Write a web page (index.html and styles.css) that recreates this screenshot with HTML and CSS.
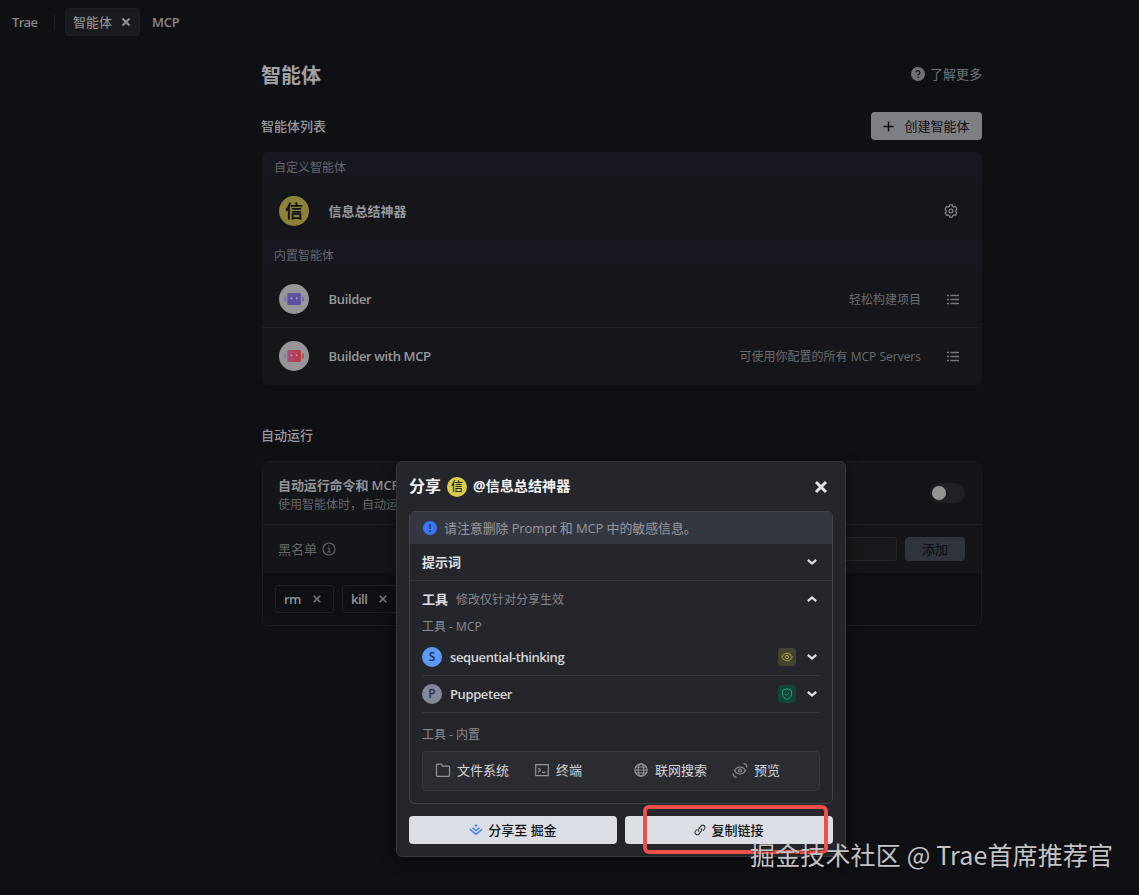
FILE: index.html
```html
<!DOCTYPE html>
<html lang="zh-CN">
<head>
  <meta charset="UTF-8">
  <title>智能体</title>
  <link rel="stylesheet" href="styles.css">
</head>
<body>

  <!-- Tabs -->
  <div class="tabs">
    <div class="tab tab-first">Trae</div>
    <div class="tab-line"></div>
    <div class="tab active">智能体
      <svg width="10" height="10" viewBox="0 0 10 10"><path d="M1.5 1.5l7 7M8.5 1.5l-7 7" stroke="#8f9094" stroke-width="2"/></svg>
    </div>
    <div class="tab tab-mcp">MCP</div>
  </div>

  <div class="page">
    <div class="page-head">
      <h1>智能体</h1>
      <div class="learn-more">
        <svg width="14" height="14" viewBox="0 0 14 14"><circle cx="7" cy="7" r="7" fill="#707174"/><path d="M5.1 5.5a1.9 1.9 0 1 1 2.8 1.7c-.6.3-.9.6-.9 1.2" fill="none" stroke="#101115" stroke-width="1.3"/><circle cx="7" cy="10.3" r=".8" fill="#101115"/></svg>
        了解更多
      </div>
    </div>

    <div class="list-head">
      <h2>智能体列表</h2>
      <button class="create">
        <svg width="11" height="11" viewBox="0 0 11 11"><path d="M5.5 .5v10M.5 5.5h10" stroke="#0c0d10" stroke-width="1.4"/></svg>
        创建智能体
      </button>
    </div>

    <div class="card">
      <div class="group">自定义智能体</div>
      <div class="agent custom">
        <div class="avatar yellow">信</div>
        <div class="agent-name">信息总结神器</div>
        <svg class="gear" width="14" height="14" viewBox="0 0 14 14" fill="none" stroke="#85868a" stroke-width="1.2" stroke-linejoin="round"><path d="M5.7.8h2.6l.5 1.7 1.1.6 1.7-.4 1.3 2.3-1.2 1.3v1.4l1.2 1.3-1.3 2.3-1.7-.4-1.1.6-.5 1.7H5.7l-.5-1.7-1.1-.6-1.7.4L1.1 9l1.2-1.3V6.3L1.1 5l1.3-2.3 1.7.4 1.1-.6z"/><circle cx="7" cy="7" r="1.9"/></svg>
      </div>
      <div class="group">内置智能体</div>
      <div class="agent">
        <div class="avatar">
          <svg width="20" height="14" viewBox="0 0 20 14"><rect x="3.3" y="1" width="13.6" height="12" rx="1.5" fill="#5d51a4"/><path d="M1 4.5v5M19 4.5v5" stroke="#7268ad" stroke-width="1.7"/><circle cx="7.5" cy="6.3" r=".9" fill="#b9b4d6"/><circle cx="12.7" cy="6.3" r=".9" fill="#b9b4d6"/></svg>
        </div>
        <div class="agent-name latin">Builder</div>
        <div class="agent-desc">轻松构建项目</div>
        <svg class="list-icon" width="12" height="12" viewBox="0 0 12 12"><path d="M0 1.500h2M0 5.500h2M0 9.500h2M3.500 1.500H12M3.500 5.500H12M3.500 9.500H12" stroke="#77787c" stroke-width="1.300"/></svg>
      </div>
      <div class="agent last">
        <div class="avatar">
          <svg width="20" height="14" viewBox="0 0 20 14"><defs><linearGradient id="mcp"><stop offset="0" stop-color="#a75085"/><stop offset="1" stop-color="#b83339"/></linearGradient></defs><rect x="3.3" y="1" width="13.6" height="12" rx="1.5" fill="url(#mcp)"/><path d="M1 4.5v5" stroke="#9a74a0" stroke-width="1.7"/><path d="M19 4.5v5" stroke="#b1474b" stroke-width="1.7"/><circle cx="7.5" cy="6.3" r=".9" fill="#d5a7b4"/><circle cx="12.7" cy="6.3" r=".9" fill="#d5a7b4"/></svg>
        </div>
        <div class="agent-name latin">Builder with MCP</div>
        <div class="agent-desc">可使用你配置的所有 MCP Servers</div>
        <svg class="list-icon" width="12" height="12" viewBox="0 0 12 12"><path d="M0 1.500h2M0 5.500h2M0 9.500h2M3.500 1.500H12M3.500 5.500H12M3.500 9.500H12" stroke="#77787c" stroke-width="1.300"/></svg>
      </div>
    </div>

    <h2 class="auto-title">自动运行</h2>

    <div class="card auto">
      <div class="auto-row">
        <div class="auto-text">
          <h3>自动运行命令和 MCP</h3>
          <p>使用智能体时，自动运</p>
        </div>
        <div class="switch"></div>
      </div>
      <div class="black-row">
        <span>黑名单</span>
        <svg width="14" height="14" viewBox="0 0 14 14" fill="none" stroke="#66676b" stroke-width="1.1"><circle cx="7" cy="7" r="6"/><path d="M5.8 6.2H7.2V10M5.5 10h3.2M7 3.5v1.3"/></svg>
        <div class="black-input"></div>
        <button class="add">添加</button>
      </div>
      <div class="chips">
        <div class="chip">rm <svg width="8" height="8" viewBox="0 0 8 8"><path d="M.7 .7l6.600 6.600M7.300 .7L.7 7.300" stroke="#77787c" stroke-width="1.6"/></svg></div>
        <div class="chip">kill <svg width="8" height="8" viewBox="0 0 8 8"><path d="M.7 .7l6.600 6.600M7.300 .7L.7 7.300" stroke="#77787c" stroke-width="1.6"/></svg></div>
      </div>
    </div>
  </div>

  <!-- Share dialog -->
  <div class="modal">
    <div class="modal-head">
      <span class="share">分享</span>
      <span class="avatar-sm">信</span>
      <span class="share-name">@信息总结神器</span>
      <svg width="14" height="14" viewBox="0 0 14 14"><path d="M2 2l10 10M12 2L2 12" stroke="#e2e3e6" stroke-width="3"/></svg>
    </div>

    <div class="panel">
      <div class="notice">
        <svg width="14" height="14" viewBox="0 0 14 14"><circle cx="7" cy="7" r="7" fill="#3a76f5"/><path d="M7 3v5" stroke="#1d2d52" stroke-width="1.4"/><circle cx="7" cy="10.2" r=".9" fill="#1d2d52"/></svg>
        <span>请注意删除 Prompt 和 MCP 中的敏感信息。</span>
      </div>
      <div class="prompt-row">
        <b>提示词</b>
        <svg class="chevron" width="10" height="6" viewBox="0 0 10 6"><path d="M.8 .8L5 4.5 9.2 .8"/></svg>
      </div>
      <div class="tools">
        <div class="tools-head">
          <b>工具</b><span>修改仅针对分享生效</span>
          <svg class="chevron" width="10" height="6" viewBox="0 0 10 6"><path d="M.8 5.2L5 1.5 9.2 5.2"/></svg>
        </div>
        <div class="label">工具 - MCP</div>
        <div class="tool">
          <span class="letter blue">S</span>
          <span class="tool-name">sequential-thinking</span>
          <span class="badge eye"><svg width="12" height="12" viewBox="0 0 12 12" fill="none" stroke="#b5ac4c"><path d="M.8 6C2 3.600 3.800 2.200 6 2.200S10 3.600 11.200 6C10 8.400 8.200 9.800 6 9.800S2 8.400 .8 6z"/><circle cx="6" cy="6" r="1.7"/></svg></span>
          <svg class="chevron" width="10" height="6" viewBox="0 0 10 6"><path d="M.8 .8L5 4.5 9.2 .8"/></svg>
        </div>
        <div class="tool">
          <span class="letter gray">P</span>
          <span class="tool-name">Puppeteer</span>
          <span class="badge shield"><svg width="12" height="12" viewBox="0 0 12 12" fill="none" stroke="#22a374"><path d="M6 .7l4.500 1.600v4.200C10.500 8.800 8.600 10.500 6 11.400 3.400 10.500 1.500 8.800 1.500 6.500V2.300z"/><path d="M3.900 5.700l1.600 1.600 2.700-2.700"/></svg></span>
          <svg class="chevron" width="10" height="6" viewBox="0 0 10 6"><path d="M.8 .8L5 4.5 9.2 .8"/></svg>
        </div>
        <div class="label label-inner">工具 - 内置</div>
        <div class="builtin">
          <div><svg width="16" height="16" viewBox="0 0 16 16"><path d="M1.500 13.300V3.200c0-.6.4-1 1-1h3.700l1.600 1.900h5.700c.6 0 1 .4 1 1v8.200c0 .6-.4 1-1 1h-11c-.6 0-1-.4-1-1z"/></svg>文件系统</div>
          <div><svg width="16" height="16" viewBox="0 0 16 16"><path d="M1.700 2.700h12.600v11H1.700zM4.200 6l2.200 2.100-2.200 2.100M8 10.300h3.500"/></svg>终端</div>
          <div><svg width="16" height="16" viewBox="0 0 16 16"><circle cx="8" cy="8" r="6.200"/><ellipse cx="8" cy="8" rx="2.800" ry="6.200"/><path d="M1.800 8h12.400M2.600 5h10.800M2.600 11h10.800"/></svg>联网搜索</div>
          <div><svg width="16" height="16" viewBox="0 0 16 16"><path d="M2.500 8.500C3.800 6.300 5.700 5 8 5s4.200 1.300 5.500 3.500C12.200 10.600 10.300 12 8 12S3.800 10.600 2.500 8.500z"/><circle cx="8" cy="8.500" r="1.500"/><path d="M11.500 1.500c2 .3 3.400 1.800 3.400 4M1 11.500c.2 2 1.500 3.600 3.500 3.800"/></svg>预览</div>
        </div>
      </div>
    </div>

    <div class="actions">
      <button>
        <svg width="14" height="12" viewBox="0 0 14 12" fill="none" stroke="#327df2" stroke-width="1.4"><path d="M.8 5.300L7 10.300l6.200-5M3.400 3.700L7 6.500l3.600-2.800"/><path d="M7 .3l1.600 1.300L7 2.900 5.400 1.600z" fill="#327df2" stroke="none"/></svg>
        分享至 掘金
      </button>
      <button>
        <svg width="12" height="12" viewBox="0 0 12 12" fill="none" stroke="#34363b" stroke-width="1.1"><path d="M5.200 7.600c-1-.8-1.100-2-.3-3l2-2.500c.8-1 2.200-1.100 3.200-.3s1.100 2.200.3 3.200L9.100 6.600M6.800 4.400c1 .8 1.100 2 .3 3l-2 2.500c-.8 1-2.200 1.100-3.200.3s-1.100-2.200-.3-3.200l1.300-1.600"/></svg>
        复制链接
      </button>
    </div>
  </div>

  <div class="red-box"></div>
  <div class="watermark">掘金技术社区 @ Trae首席推荐官</div>

</body>
</html>
```
FILE: styles.css
```css
* {
  box-sizing: border-box;
}

body {
  position: relative;
  margin: 0;
  width: 1139px;
  height: 895px;
  overflow: hidden;
  background-color: #0f1014;
  color: #9a9b9f;
  font-family: "Open Sans", "Noto Sans CJK SC", sans-serif;
  font-size: 13px;
  line-height: 20px;
}

h1, h2, h3, p {
  margin: 0;
}

svg {
  display: block;
  flex-shrink: 0;
}

button {
  display: flex;
  align-items: center;
  justify-content: center;
  padding: 0 0 2px;
  border: none;
  border-radius: 4px;
  font-family: inherit;
  font-size: 13px;
}

button svg {
  margin-top: 2px;
}

/* tabs */
.tabs {
  display: flex;
  align-items: center;
  height: 44px;
  padding-left: 12px;
}

.tab {
  font-weight: 600;
  color: #85868a;
  letter-spacing: -0.7px;
}

.tab-first {
  width: 42px;
}

.tab-line {
  width: 1px;
  height: 16px;
  margin-right: 10px;
  background-color: #1c1d21;
}

.tab.active {
  display: flex;
  align-items: center;
  justify-content: space-between;
  width: 75px;
  height: 28px;
  padding: 0 8px 0 7px;
  border-radius: 4px;
  border: 1px solid #1e1f23;
  background-color: #1a1b1f;
  color: #9a9b9f;
  letter-spacing: 0;
  font-weight: 400;
}

.tab-mcp {
  margin-left: 12px;
  letter-spacing: -0.2px;
}

/* agents */
.page {
  width: 720px;
  margin-left: 262px;
}

.page-head {
  display: flex;
  justify-content: space-between;
  align-items: center;
  height: 62px;
}

h1 {
  padding-top: 1px;
  margin-left: -1px;
  font-size: 20px;
  font-weight: 700;
  color: #a1a1a3;
}

.learn-more {
  display: flex;
  align-items: center;
  gap: 5px;
  padding-bottom: 2px;
  color: #707175;
}

.list-head {
  display: flex;
  justify-content: space-between;
  align-items: center;
  height: 40px;
  margin-bottom: 6px;
}

h2 {
  margin-left: -1px;
  font-size: 13px;
  font-weight: 500;
  color: #98999c;
}

.create {
  width: 111px;
  height: 28px;
  gap: 10px;
  background-color: #7e7f84;
  color: #0c0d10;
}

.card {
  height: 233px;
  border-radius: 6px;
  overflow: hidden;
  background-color: #141619;
}

.group {
  height: 31px;
  padding-left: 12px;
  background-color: #17181f;
  color: #66676d;
  font-size: 12px;
  line-height: 31px;
}

.agent {
  display: flex;
  align-items: center;
  height: 57px;
  padding: 0 23px 0 17px;
  border-bottom: 1px solid #1f2024;
}

.agent.custom {
  padding-right: 24px;
  border-bottom-color: transparent;
}

.agent.last {
  height: 56px;
  border-bottom: none;
}

.avatar {
  display: flex;
  align-items: center;
  justify-content: center;
  width: 30px;
  height: 30px;
  margin-right: 19.5px;
  border-radius: 50%;
  background-color: #969698;
}

.avatar.yellow {
  background-color: #8c8339;
  color: #131311;
  font-size: 18px;
  font-weight: 700;
}

.agent-name {
  font-weight: 600;
  color: #98999d;
}

.latin {
  letter-spacing: -0.35px;
}

.agent-desc {
  margin-left: auto;
  margin-right: 26px;
  padding-top: 1px;
  color: #6c6d72;
  font-size: 12px;
}

.list-icon {
  margin-top: 1px;
}

.gear {
  margin-left: auto;
}

/* auto run */
.auto-title {
  margin-top: 40px;
  margin-bottom: 16px;
}

.card.auto {
  height: 165px;
  border: 1px solid #1b1c20;
  background-color: #0f1014;
}

.auto-row {
  display: flex;
  align-items: center;
  justify-content: space-between;
  height: 63px;
  padding: 0 16px 0 15px;
  border-bottom: 1px solid #1f2024;
  background-color: #131518;
}

.auto-text {
  padding-top: 3px;
  white-space: nowrap;
}

h3 {
  color: #929397;
  font-size: 13px;
  font-weight: 600;
  letter-spacing: -0.1px;
}

.auto-text p {
  color: #66676b;
  font-size: 12px;
}

.switch {
  width: 35px;
  height: 20px;
  padding: 3px 2px;
  border-radius: 10px;
  background-color: #202124;
}

.switch::before {
  content: "";
  display: block;
  width: 14px;
  height: 14px;
  border-radius: 50%;
  background-color: #959596;
}

.black-row {
  display: flex;
  align-items: center;
  height: 48px;
  padding: 0 16px 0 15px;
  background-color: #131518;
  color: #66676b;
}

.black-row svg {
  margin-left: 5px;
}

.black-input {
  width: 200px;
  height: 24px;
  margin-left: auto;
  margin-right: 8px;
  border: 1px solid #242529;
  border-radius: 3px;
  background-color: #17181b;
}

.add {
  width: 60px;
  height: 24px;
  background-color: #2f333b;
  color: #090a0d;
}

.chips {
  display: flex;
  gap: 8px;
  padding: 12px;
}

.chip {
  display: flex;
  align-items: center;
  gap: 12px;
  height: 28px;
  padding: 0 12px 0 8px;
  border: 1px solid #1e1f23;
  border-radius: 3px;
  color: #929397;
  font-weight: 600;
  letter-spacing: -0.5px;
}

/* dialog */
.modal {
  position: absolute;
  left: 396px;
  top: 461px;
  width: 450px;
  height: 396px;
  padding: 0 12px;
  border: 1px solid #36383d;
  border-radius: 6px;
  background-color: #25262b;
  box-shadow: 0 4px 16px rgba(0, 0, 0, 0.4);
}

.modal-head {
  display: flex;
  align-items: center;
  height: 49px;
  color: #f4f4f6;
  font-weight: 700;
}

.modal-head svg {
  margin-left: auto;
  margin-right: 5px;
}

.share {
  padding-bottom: 1px;
  font-size: 16px;
}

.avatar-sm {
  width: 20px;
  height: 20px;
  margin: 0 6px;
  border-radius: 50%;
  background-color: #d8cb50;
  color: #26251b;
  font-size: 12px;
  font-weight: 500;
  text-align: center;
}

.share-name {
  padding-bottom: 1px;
  font-size: 14px;
  letter-spacing: 0.1px;
}

.panel {
  height: 293px;
  border: 1px solid #42444a;
  border-radius: 6px;
  overflow: hidden;
}

.notice {
  display: flex;
  align-items: center;
  gap: 7px;
  height: 32px;
  padding-left: 13px;
  background-color: #343740;
  color: #9698a0;
}

.notice span {
  letter-spacing: -0.12px;
}

.prompt-row {
  display: flex;
  align-items: center;
  justify-content: space-between;
  height: 37px;
  padding: 0 15px 0 12px;
  border-bottom: 1px solid #34363b;
}

b {
  color: #e0e1e5;
  font-weight: 600;
}

.chevron {
  fill: none;
  stroke: #dfe0e3;
  stroke-width: 2.2;
}

.tools {
  padding: 8px 12px;
}

.tools-head {
  display: flex;
  align-items: center;
  height: 20px;
  padding-right: 3px;
}

.tools-head span {
  margin-left: 8px;
  padding-top: 2px;
  color: #85878d;
  font-size: 12px;
}

.tools-head .chevron {
  margin-left: auto;
}

.label {
  margin-top: 8px;
  margin-bottom: 2px;
  color: #898b91;
  font-size: 12px;
}

.tool {
  display: flex;
  align-items: center;
  height: 37px;
  padding-right: 3px;
  border-bottom: 1px solid #34363b;
}

.letter {
  width: 20px;
  height: 20px;
  border-radius: 50%;
  color: #24324d;
  font-size: 12px;
  font-weight: 600;
  text-align: center;
}

.blue {
  background-color: #5c9bf6;
}

.gray {
  background-color: #858898;
}

.tool-name {
  margin-left: 8px;
  color: #d5d6da;
  font-weight: 600;
  letter-spacing: -0.4px;
}

.badge {
  display: flex;
  align-items: center;
  justify-content: center;
  width: 18px;
  height: 18px;
  margin-left: auto;
  margin-right: 11px;
  border-radius: 3px;
}

.eye {
  background-color: #434330;
}

.shield {
  background-color: #14433c;
}

.label-inner {
  margin-top: 12px;
  margin-bottom: 6px;
}

.builtin {
  display: grid;
  grid-template-columns: 99px 99px 99px 1fr;
  align-items: center;
  height: 40px;
  padding: 0 0 2px 12px;
  border: 1px solid #37393f;
  border-radius: 4px;
  background-color: #2b2c32;
  color: #d5d6da;
}

.builtin div {
  display: flex;
  align-items: center;
  gap: 6px;
}

.builtin svg {
  fill: none;
  stroke: #94969c;
  stroke-width: 1.2;
}

.actions {
  display: grid;
  grid-template-columns: 1fr 1fr;
  gap: 8px;
  margin-top: 12px;
}

.actions button {
  height: 28px;
  gap: 5px;
  background-color: #dcdee6;
  color: #111216;
  font-weight: 500;
}

/* marks on top of the dialog */
.red-box {
  position: absolute;
  left: 643px;
  top: 805px;
  width: 185px;
  height: 49px;
  border: 4px solid #ec5048;
  border-radius: 6px;
}

.watermark {
  position: absolute;
  left: 750px;
  top: 836px;
  color: #c4c4c6;
  font-family: "Noto Sans CJK SC", sans-serif;
  font-size: 25px;
  line-height: 36px;
  letter-spacing: 0.15px;
  white-space: nowrap;
  text-shadow: 1px 1px 1px rgba(0, 0, 0, 0.5);
}
```
